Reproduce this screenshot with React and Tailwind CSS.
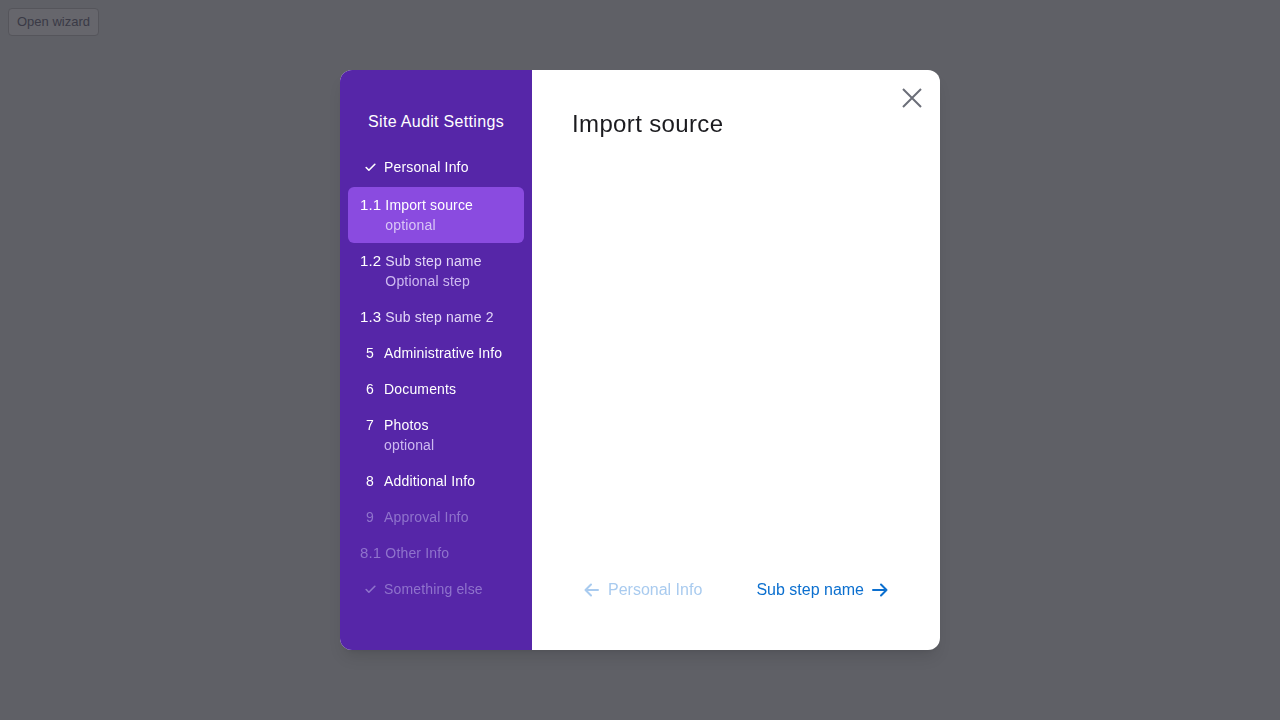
import React from 'react';
import { Check } from 'lucide-react';

const steps = [
  { key: 'pi', marker: 'check', label: 'Personal Info', state: 'done' },
  { key: '1.1', marker: '1.1', label: 'Import source', sub: 'optional', state: 'active', child: true },
  { key: '1.2', marker: '1.2', label: 'Sub step name', sub: 'Optional step', state: 'child', child: true },
  { key: '1.3', marker: '1.3', label: 'Sub step name 2', state: 'child', child: true },
  { key: '5', marker: '5', label: 'Administrative Info', state: 'todo' },
  { key: '6', marker: '6', label: 'Documents', state: 'todo' },
  { key: '7', marker: '7', label: 'Photos', sub: 'optional', state: 'todo' },
  { key: '8', marker: '8', label: 'Additional Info', state: 'todo' },
  { key: '9', marker: '9', label: 'Approval Info', state: 'disabled' },
  { key: '8.1', marker: '8.1', label: 'Other Info', state: 'disabled', child: true },
  { key: 'se', marker: 'check', label: 'Something else', state: 'disabled' },
];

const Arrow = ({ left }) => (
  <svg width="16" height="16" viewBox="0 0 16 16" fill="none" stroke="currentColor" strokeWidth="2" strokeLinecap="round" strokeLinejoin="round">
    {left ? <path d="M14 8H1.5M7 2.5L1.5 8L7 13.5" /> : <path d="M1 8H14.5M9 2.5L14.5 8L9 13.5" />}
  </svg>
);

const StepRow = ({ step }) => {
  const disabled = step.state === 'disabled';
  const active = step.state === 'active';
  const markerColor = disabled ? 'text-[#8f73cc]' : 'text-white';
  const labelColor = disabled
    ? 'text-[#8f73cc]'
    : step.state === 'child'
    ? 'text-[#e2d6f7]'
    : 'text-white';
  const subColor = active ? 'text-[#d9c6f6]' : 'text-[#cdb9f0]';

  return (
    <li
      className={`flex items-start gap-1 px-3 py-2 rounded-md ${active ? 'bg-[#8a4be0] mt-[2px]' : ''}`}
    >
      <span
        className={`min-w-5 h-5 flex items-center justify-center leading-5 ${markerColor} ${
          step.child ? 'text-[15px]' : 'text-sm'
        }`}
      >
        {step.marker === 'check' ? <Check size={13} strokeWidth={3} /> : step.marker}
      </span>
      <div className="flex flex-col">
        <span className={`text-sm leading-5 ${labelColor}`}>{step.label}</span>
        {step.sub && <span className={`text-sm leading-5 ${subColor}`}>{step.sub}</span>}
      </div>
    </li>
  );
};

const App = () => {
  return (
    <div
      className="w-[1280px] h-[720px] bg-[#5f6066] p-2 relative"
      style={{ fontFamily: '"Liberation Sans", Arial, sans-serif' }}
    >
      <button className="h-7 px-2 text-[13px] text-[#3a3a46] bg-[#66666c] border border-[#55555b] rounded">
        Open wizard
      </button>

      {/* Modal */}
      <div className="fixed inset-0 flex items-center justify-center">
        <div className="relative w-[600px] h-[580px] bg-white rounded-xl overflow-hidden flex shadow-lg">
          {/* Sidebar */}
          <div className="w-48 bg-[#5626a8] pt-10 px-2 flex flex-col tracking-[0.01em]">
            <h2 className="text-base leading-6 text-white text-center mb-[15px] tracking-[0.02em]">
              Site Audit Settings
            </h2>
            <ul className="flex flex-col">
              {steps.map((s) => (
                <StepRow key={s.key} step={s} />
              ))}
            </ul>
          </div>

          {/* Content */}
          <div className="flex-1 flex flex-col px-10 pt-[38px] pb-10">
            <h1 className="text-2xl leading-8 text-[#1b1b1f] tracking-[0.015em]">Import source</h1>
            <div className="flex-1" />
            <div className="flex items-center justify-between">
              <button className="h-10 px-3 flex items-center gap-2 text-base text-[#a9cbef]">
                <Arrow left />
                Personal Info
              </button>
              <button className="h-10 px-3 flex items-center gap-2 text-base text-[#0b6fcf]">
                Sub step name
                <Arrow />
              </button>
            </div>
          </div>

          <button className="absolute top-3 right-3 w-8 h-8 flex items-center justify-center text-[#6b6e78]">
            <svg width="20" height="20" viewBox="0 0 20 20" fill="none" stroke="currentColor" strokeWidth="2">
              <path d="M1 1L19 19M19 1L1 19" />
            </svg>
          </button>
        </div>
      </div>
    </div>
  );
};

export default App;
